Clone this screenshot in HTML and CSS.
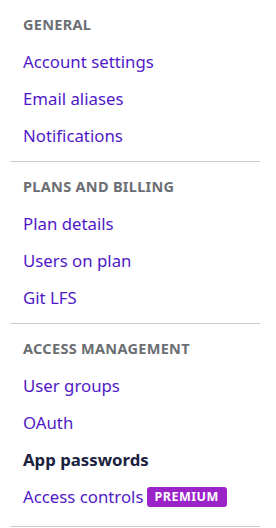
FILE: index.html
```html
<!DOCTYPE html>
<html lang="en">
  <head>
    <meta charset="UTF-8" />
    <meta name="viewport" content="width=device-width, initial-scale=1.0" />
    <title>Settings</title>
    <link rel="stylesheet" href="styles.css">
  </head>
  <body>
    <nav class="settings-nav">
      <div class="nav-section">
        <h3 class="nav-heading">General</h3>
        <a class="nav-link" href="#">Account settings</a>
        <a class="nav-link" href="#">Email aliases</a>
        <a class="nav-link" href="#">Notifications</a>
      </div>

      <div class="nav-section">
        <h3 class="nav-heading">Plans and billing</h3>
        <a class="nav-link" href="#">Plan details</a>
        <a class="nav-link" href="#">Users on plan</a>
        <a class="nav-link" href="#">Git LFS</a>
      </div>

      <div class="nav-section">
        <h3 class="nav-heading">Access management</h3>
        <a class="nav-link" href="#">User groups</a>
        <a class="nav-link" href="#">OAuth</a>
        <a class="nav-link active" href="#">App passwords</a>
        <a class="nav-link" href="#">Access controls <span class="badge">Premium</span></a>
      </div>
    </nav>
  </body>
</html>
```

FILE: styles.css
```css
:root {
  --link: #5019c8;
  --heading: #6b6e73;
  --text-dark: #1b2240;
  --divider: #cccccc;
  --premium: #9a24c8;
}

* {
  margin: 0;
  padding: 0;
  box-sizing: border-box;
}

body {
  font-family: "Noto Sans", "Open Sans", sans-serif;
  background: white;
}

/* Sidebar */
.settings-nav {
  width: 250px;
  margin-left: 10px;
}

.nav-section {
  display: flex;
  flex-direction: column;
  padding: 6px 0 7px;
  border-bottom: 1px solid var(--divider);
}

.nav-section:last-child {
  padding-bottom: 11px;
}

.nav-heading {
  height: 37px;
  line-height: 37px;
  padding-left: 13px;
  font-size: 14.5px;
  font-weight: 700;
  letter-spacing: 0.3px;
  text-transform: uppercase;
  color: var(--heading);
}

.nav-link {
  display: flex;
  align-items: center;
  gap: 3px;
  height: 37px;
  padding-left: 13px;
  font-size: 16.8px;
  color: var(--link);
  text-decoration: none;
}

.nav-link.active {
  font-weight: 700;
  color: var(--text-dark);
}

.badge {
  display: inline-block;
  height: 20px;
  line-height: 20px;
  padding: 0 8px;
  border-radius: 3px;
  background: var(--premium);
  color: white;
  font-size: 12.5px;
  font-weight: 700;
  letter-spacing: 0.5px;
  text-transform: uppercase;
}
```
